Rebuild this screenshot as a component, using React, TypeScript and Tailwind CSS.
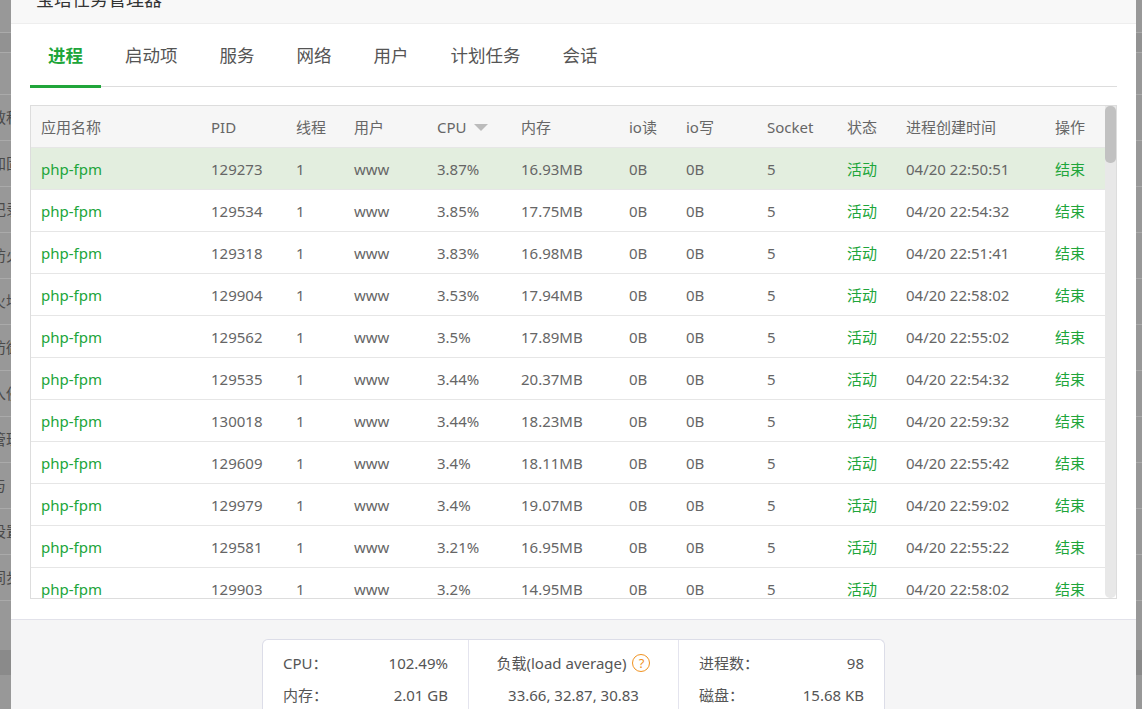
import React from "react";

const font = { fontFamily: '"Noto Sans", "Noto Sans CJK SC", sans-serif' };

const rows = [
    { pid: "129273", cpu: "3.87%", mem: "16.93MB", time: "04/20 22:50:51" },
    { pid: "129534", cpu: "3.85%", mem: "17.75MB", time: "04/20 22:54:32" },
    { pid: "129318", cpu: "3.83%", mem: "16.98MB", time: "04/20 22:51:41" },
    { pid: "129904", cpu: "3.53%", mem: "17.94MB", time: "04/20 22:58:02" },
    { pid: "129562", cpu: "3.5%", mem: "17.89MB", time: "04/20 22:55:02" },
    { pid: "129535", cpu: "3.44%", mem: "20.37MB", time: "04/20 22:54:32" },
    { pid: "130018", cpu: "3.44%", mem: "18.23MB", time: "04/20 22:59:32" },
    { pid: "129609", cpu: "3.4%", mem: "18.11MB", time: "04/20 22:55:42" },
    { pid: "129979", cpu: "3.4%", mem: "19.07MB", time: "04/20 22:59:02" },
    { pid: "129581", cpu: "3.21%", mem: "16.95MB", time: "04/20 22:55:22" },
    { pid: "129903", cpu: "3.2%", mem: "14.95MB", time: "04/20 22:58:02" },
];

const tabs = ["进程", "启动项", "服务", "网络", "用户", "计划任务", "会话"];

// what shows of the page behind the dialog, cut at its edge
const sideItems = ["教程", "加固", "记录", "防火", "火墙", "防御", "入侵", "管理", "与", "设置", "同步"];

const gridCols =
    "grid grid-cols-[170px_85px_58px_83px_84px_108px_57px_81px_80px_59px_149px_60px]";

function SideStrip({ withText }: { withText: boolean }) {
    return (
        <div className="flex h-full flex-col overflow-hidden bg-[#989898]">
            <div className="h-[33px] shrink-0 border-b border-[#aaa]" />
            <div className="h-[20px] shrink-0 border-b border-[#aaa] bg-[#929292]" />
            <div className="h-[42px] shrink-0 border-b border-[#aaa]" />
            {sideItems.map((t, i) => (
                <div
                    key={i}
                    className="flex h-[46px] shrink-0 items-center border-b border-[#aaa] text-[15px] whitespace-nowrap text-[#4a4a4a]"
                >
                    {withText ? <span className="-ml-[9px]">{t}</span> : null}
                </div>
            ))}
            <div className="h-[49px] shrink-0" />
            <div className="h-[25px] shrink-0 bg-[#8a8a8a]" />
            <div className="flex-1" />
        </div>
    );
}

export default function App() {
    return (
        <div className="flex h-[709px] w-[1142px] overflow-hidden bg-[#989898]" style={font}>
            <div className="w-[11px] shrink-0">
                <SideStrip withText={true} />
            </div>

            <div className="flex w-[1125px] shrink-0 flex-col bg-white">
                {/* title bar */}
                <div className="h-[24px] shrink-0 overflow-hidden border-b border-[#eeeeee] bg-[#f8f8f8] pl-[25px]">
                    <div className="-mt-[11px] text-[18px] leading-[20px] text-[#333]">宝塔任务管理器</div>
                </div>

                <div className="flex flex-1 flex-col px-[19px]">
                    {/* tabs */}
                    <div className="flex h-[63px] shrink-0 gap-[6px] border-b border-[#dddddd] pt-[2px]">
                        {tabs.map((t, i) => (
                            <div
                                key={t}
                                className={
                                    i === 0
                                        ? "-mb-px flex h-[62px] items-center border-b-[3px] border-[#20a53a] px-[18px] pb-[1px] text-[17.5px] font-bold text-[#20a53a]"
                                        : "-mb-px flex h-[62px] items-center border-b-[3px] border-transparent px-[18px] pb-[1px] text-[17.5px] text-[#555]"
                                }
                            >
                                {t}
                            </div>
                        ))}
                    </div>

                    {/* table */}
                    <div className="mt-[18px] flex h-[494px] shrink-0 border border-[#dddddd]">
                        <div className="flex-1 overflow-hidden text-[15px] text-[#666]">
                            <div className={`${gridCols} h-[42px] items-center border-b border-[#e6e6e6] bg-[#f6f6f6] pt-[2px]`}>
                                <div className="pl-[10px]">应用名称</div>
                                <div className="pl-[10px]">PID</div>
                                <div className="pl-[10px]">线程</div>
                                <div className="pl-[10px]">用户</div>
                                <div className="flex items-center pl-[10px]">
                                    CPU
                                    <svg width="14" height="8" viewBox="0 0 14 8" className="ml-[7px]">
                                        <path d="M0 0 L14 0 L7 7 Z" fill="#bbbbbb" />
                                    </svg>
                                </div>
                                <div className="pl-[10px]">内存</div>
                                <div className="pl-[10px]">io读</div>
                                <div className="pl-[10px]">io写</div>
                                <div className="pl-[10px]">Socket</div>
                                <div className="pl-[10px]">状态</div>
                                <div className="pl-[10px]">进程创建时间</div>
                                <div className="pl-[10px]">操作</div>
                            </div>
                            {rows.map((r, i) => (
                                <div
                                    key={i}
                                    className={`${gridCols} h-[42px] items-center border-b border-[#e6e6e6] pt-[2px] ${
                                        i === 0 ? "bg-[#e3eedf]" : "bg-white"
                                    }`}
                                >
                                    <div className="pl-[10px] text-[#20a53a]">php-fpm</div>
                                    <div className="pl-[10px]">{r.pid}</div>
                                    <div className="pl-[10px]">1</div>
                                    <div className="pl-[10px]">www</div>
                                    <div className="pl-[10px]">{r.cpu}</div>
                                    <div className="pl-[10px]">{r.mem}</div>
                                    <div className="pl-[10px]">0B</div>
                                    <div className="pl-[10px]">0B</div>
                                    <div className="pl-[10px]">5</div>
                                    <div className="pl-[10px] text-[#20a53a]">活动</div>
                                    <div className="pl-[10px]">{r.time}</div>
                                    <div className="pl-[10px] text-[#20a53a]">结束</div>
                                </div>
                            ))}
                        </div>
                        <div className="w-[11px] shrink-0 rounded-b-[5px] bg-[#e8e8e8]">
                            <div className="h-[57px] rounded-[5px] bg-[#c1c1c1]" />
                        </div>
                    </div>
                    <div className="h-[20px] shrink-0" />
                </div>

                {/* footer stats */}
                <div className="flex h-[91px] shrink-0 justify-center border-t border-[#e2e2ea] bg-[#f5f5f6] pt-[19px]">
                    <div className="flex w-[623px] rounded-t-[6px] border border-b-0 border-[#dcdde8] bg-white text-[15px] text-[#555]">
                        <div className="flex w-[206px] flex-col border-r border-[#e4e4ee] px-[20px] pt-[10px]">
                            <div className="flex h-[26px] items-center justify-between">
                                <span>CPU：</span>
                                <span>102.49%</span>
                            </div>
                            <div className="mt-[6px] flex h-[26px] items-center justify-between">
                                <span>内存：</span>
                                <span>2.01 GB</span>
                            </div>
                        </div>
                        <div className="flex w-[210px] flex-col items-center border-r border-[#e4e4ee] pt-[10px]">
                            <div className="flex h-[26px] items-center">
                                <span>负载(load average)</span>
                                <span className="ml-[6px] flex h-[18px] w-[18px] items-center justify-center rounded-full border-[1.5px] border-[#f0921f] text-[13px] leading-none text-[#f0921f]">
                                    ?
                                </span>
                            </div>
                            <div className="mt-[6px] flex h-[26px] items-center">33.66, 32.87, 30.83</div>
                        </div>
                        <div className="flex flex-1 flex-col px-[20px] pt-[10px]">
                            <div className="flex h-[26px] items-center justify-between">
                                <span>进程数：</span>
                                <span>98</span>
                            </div>
                            <div className="mt-[6px] flex h-[26px] items-center justify-between">
                                <span>磁盘：</span>
                                <span>15.68 KB</span>
                            </div>
                        </div>
                    </div>
                </div>
            </div>

            <div className="flex-1">
                <SideStrip withText={false} />
            </div>
        </div>
    );
}
